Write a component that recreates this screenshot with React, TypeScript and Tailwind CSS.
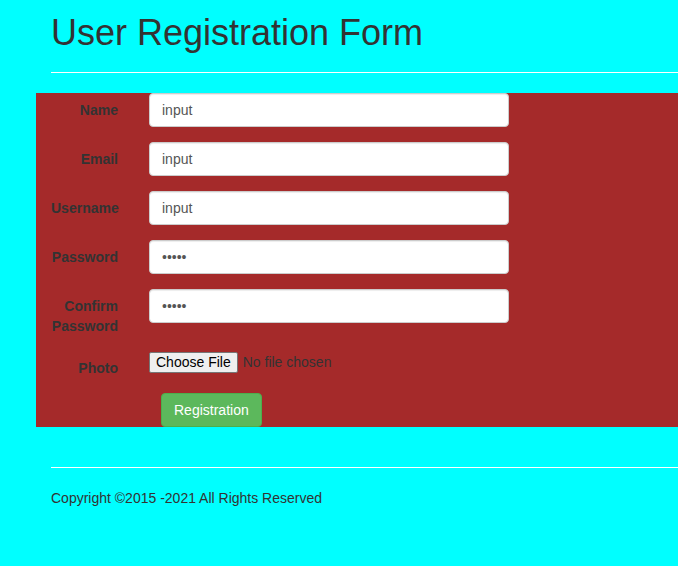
const fields = [
  { label: "Name", type: "text", value: "input" },
  { label: "Email", type: "text", value: "input" },
  { label: "Username", type: "text", value: "input" },
  { label: "Password", type: "password", value: "input" },
  { label: "Confirm Password", type: "password", value: "input" },
];

export default function App() {
  return (
    <div className="min-h-screen bg-[#00ffff] font-['Liberation_Sans',Arial,sans-serif] text-[14px] leading-[20px] text-[#333]">
      {/* header */}
      <div className="pl-[51px] pt-[13px]">
        <h1 className="border-b border-white pb-[19px] text-[36px] leading-[40px] font-normal">
          User Registration Form
        </h1>
      </div>

      <form className="ml-[36px] mt-[20px] bg-[#a52a2a] pb-0">
        {fields.map((f) => (
          <div key={f.label} className="mb-[15px] flex items-start">
            <label className="w-[97px] shrink-0 px-[15px] pt-[7px] text-right font-bold">
              {f.label}
            </label>
            <input
              type={f.type}
              defaultValue={f.value}
              className="ml-[16px] h-[34px] w-[360px] rounded-[4px] border border-[#ccc] bg-white px-[12px] text-[14px] text-[#555] shadow-[inset_0_1px_1px_rgba(0,0,0,0.075)] outline-none"
            />
          </div>
        ))}
        <div className="mb-[15px] flex items-start">
          <label className="w-[97px] shrink-0 px-[15px] pt-[7px] text-right font-bold">
            Photo
          </label>
          <input
            type="file"
            className="ml-[16px] mt-[1px] text-[14px] leading-[20px] text-[#333] file:mr-[5px] file:h-[21px] file:rounded-[2px] file:border file:border-solid file:border-[#767676] file:bg-[#efefef] file:px-[6px] file:text-[14px] file:leading-[19px] file:text-black"
          />
        </div>
        <div className="flex">
          <button
            type="button"
            className="ml-[125px] h-[34px] rounded-[4px] border border-[#4cae4c] bg-[#5cb85c] px-[12px] text-[14px] text-white"
          >
            Registration
          </button>
        </div>
      </form>

      {/* footer */}
      <div className="pl-[51px] pt-[40px]">
        <div className="border-t border-white pt-[20px]">
          Copyright ©2015 -2021 All Rights Reserved
        </div>
      </div>
    </div>
  );
}
